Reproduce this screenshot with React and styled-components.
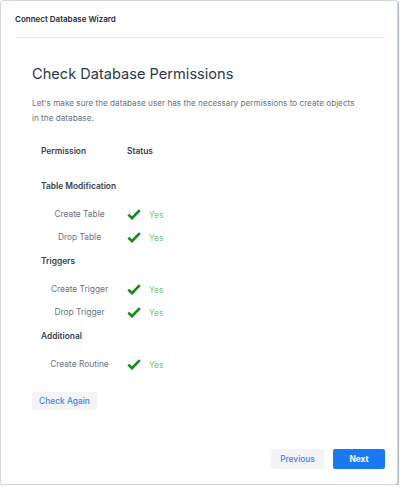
import React from "react";
import styled, { createGlobalStyle } from "styled-components";

const GlobalStyle = createGlobalStyle`
  html, body {
    margin: 0;
    padding: 0;
    background: #ffffff;
  }
  body {
    font-family: "Inter", "Noto Sans", sans-serif;
  }
`;

const Card = styled.div`
  box-sizing: border-box;
  width: 398px;
  height: 485px;
  display: flex;
  flex-direction: column;
  padding: 0 12px 15px 14px;
  background: #ffffff;
  border: 1px solid #d3d8e0;
  border-radius: 3px;
  box-shadow: 1px 1px 1px #aab3c1;
`;

const Header = styled.div`
  height: 36px;
  display: flex;
  align-items: center;
  border-bottom: 1px solid #e8eaee;
  font-size: 8px;
  font-weight: 600;
  color: #1f2937;
`;

const Content = styled.div`
  flex: 1;
  padding: 24px 0 0 17px;
`;

const Title = styled.h1`
  margin: 0;
  font-size: 14.6px;
  font-weight: 400;
  line-height: 24px;
  color: #2d3748;
`;

const Intro = styled.p`
  margin: 10px 0 14px;
  font-size: 8.2px;
  line-height: 15px;
  color: #6b7280;
  max-width: 330px;
`;

const Table = styled.div`
  display: grid;
  grid-template-columns: 86px auto;
  font-size: 8.4px;
`;

const HeadCell = styled.div`
  padding-left: 9px;
  height: 23px;
  line-height: 23px;
  margin-bottom: 11px;
  font-weight: 600;
  color: #374151;
`;

const Section = styled.div`
  grid-column: 1 / -1;
  padding: 6px 0 0 9px;
  height: 29px;
  box-sizing: border-box;
  line-height: 13px;
  font-weight: 600;
  color: #374151;
`;

const Label = styled.div`
  padding-left: 9px;
  height: 23px;
  line-height: 23px;
  text-align: center;
  color: #6b7280;
`;

const Status = styled.div`
  padding-left: 9px;
  height: 23px;
  display: flex;
  align-items: center;
  gap: 8px;
  color: ${(p) => (p.ok ? "#7cc47f" : "#e06b6b")};
`;

const Actions = styled.div`
  margin-top: 12px;
`;

const Button = styled.button`
  border: none;
  border-radius: 2px;
  font-family: inherit;
  font-size: 8.4px;
  cursor: pointer;
  padding: 0;
  height: ${(p) => p.h || 18}px;
  width: ${(p) => p.w}px;
  background: ${(p) => (p.primary ? "#1a79f0" : "#f3f4f6")};
  color: ${(p) => (p.primary ? "#ffffff" : "#3b82f6")};
  font-weight: ${(p) => (p.primary ? 700 : 500)};
`;

const Footer = styled.div`
  display: flex;
  justify-content: flex-end;
  gap: 9px;
`;

const Check = () => (
  <svg width="14" height="11" viewBox="0 0 14 11">
    <path
      d="M1.3 5.6 L5 9.2 L12.8 1.2"
      fill="none"
      stroke="#14891b"
      strokeWidth="2.6"
      strokeLinejoin="miter"
    />
  </svg>
);

const groups = [
  { name: "Table Modification", items: ["Create Table", "Drop Table"] },
  { name: "Triggers", items: ["Create Trigger", "Drop Trigger"] },
  { name: "Additional", items: ["Create Routine"] },
];

export default function App() {
  return (
    <>
      <GlobalStyle />
      <Card>
        <Header>Connect Database Wizard</Header>
        <Content>
          <Title>Check Database Permissions</Title>
          <Intro>
            Let's make sure the database user has the necessary permissions to
            create objects in the database.
          </Intro>
          <Table>
            <HeadCell>Permission</HeadCell>
            <HeadCell>Status</HeadCell>
            {groups.map((g) => (
              <React.Fragment key={g.name}>
                <Section>{g.name}</Section>
                {g.items.map((item) => (
                  <React.Fragment key={item}>
                    <Label>{item}</Label>
                    <Status ok>
                      <Check />
                      Yes
                    </Status>
                  </React.Fragment>
                ))}
              </React.Fragment>
            ))}
          </Table>
          <Actions>
            <Button w={65}>Check Again</Button>
          </Actions>
        </Content>
        <Footer>
          <Button w={53} h={20}>Previous</Button>
          <Button w={52} h={20} primary>Next</Button>
        </Footer>
      </Card>
    </>
  );
}
